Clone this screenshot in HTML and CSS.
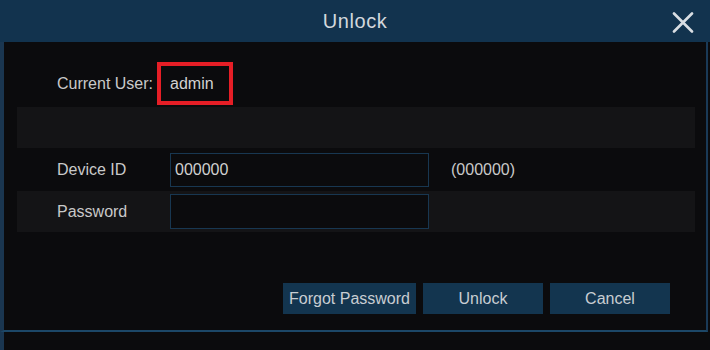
FILE: index.html
```html
<!doctype html>
<html>
<head>
  <meta charset="utf-8">
  <meta name="viewport" content="width=device-width,initial-scale=1">
  <title>Unlock</title>
  <link rel="stylesheet" href="styles.css">
</head>
<body>
  <div class="dialog">
    <div class="titlebar">
      <span></span>
      <h2 class="title">Unlock</h2>
      <span class="close" title="Close">
        <svg width="22" height="21" viewBox="0 0 22 21">
          <path d="M2 1.5 L20 19.5 M20 1.5 L2 19.5" stroke="#d9dee3" stroke-width="2.6" stroke-linecap="round" fill="none"/>
        </svg>
      </span>
    </div>
    <div class="content">
      <div class="user-row">
        <span class="user-label">Current User:</span>
        <span class="user-box">admin</span>
      </div>
      <div class="row band"></div>
      <div class="row">
        <label class="label" for="device-id">Device ID</label>
        <input id="device-id" class="field" type="text" value="000000">
        <span class="hint">(000000)</span>
      </div>
      <div class="row band">
        <label class="label" for="password">Password</label>
        <input id="password" class="field" type="password" value="">
      </div>
      <div class="buttons">
        <button class="btn btn-forgot">Forgot Password</button>
        <button class="btn">Unlock</button>
        <button class="btn">Cancel</button>
      </div>
    </div>
    <div class="below"></div>
  </div>
</body>
</html>
```

FILE: styles.css
```css
body {
  margin: 0;
  background: #0b0b0d;
  font-family: "Liberation Sans", Arial, Helvetica, sans-serif;
  color: #c9c9c9;
  font-size: 16px;
}

.dialog {
  width: 710px;
  height: 350px;
  display: flex;
  flex-direction: column;
  background: #0b0b0d;
}

.titlebar {
  height: 42px;
  flex: none;
  display: grid;
  grid-template-columns: 1fr auto 1fr;
  align-items: center;
  background: #12334e;
}

.title {
  margin: 0;
  font-size: 20px;
  font-weight: normal;
  letter-spacing: 0.6px;
  color: #d3d8dd;
  padding-top: 1px;
}

.close {
  justify-self: end;
  margin-right: 16px;
  margin-top: 2px;
  display: flex;
  cursor: pointer;
}

.content {
  flex: 1;
  display: flex;
  flex-direction: column;
  border-left: 4px solid #1a3650;
  border-right: 2px solid #1a3a57;
  border-bottom: 2px solid #1c4767;
  margin-right: 2px;
  padding: 20px 11px 0 13px;
}

.user-row {
  display: flex;
  align-items: center;
  padding-left: 40px;
  height: 43px;
}

.user-label {
  width: 100px;
}

.user-box {
  box-sizing: border-box;
  height: 43px;
  width: 76px;
  border: 4px solid #e61e26;
  padding-left: 9px;
  line-height: 35px;
  color: #d2d2d2;
}

.row {
  display: flex;
  align-items: center;
  height: 43px;
  padding-left: 40px;
}

.band {
  height: 41px;
  background: #141416;
}

.user-row + .band {
  margin-top: 2px;
}

.label {
  width: 113px;
}

.field {
  box-sizing: border-box;
  width: 259px;
  height: 34px;
  margin: 0;
  padding: 0 4px;
  border: 1px solid #183751;
  background: #0b0b0d;
  color: #d0d0d0;
  font: 16px "Liberation Sans", Arial, sans-serif;
  outline: 0;
}

.band .field {
  height: 35px;
}

.hint {
  margin-left: 22px;
}

.buttons {
  display: flex;
  justify-content: flex-end;
  gap: 7px;
  margin-top: 51px;
  padding-right: 25px;
}

.btn {
  width: 120px;
  height: 31px;
  border: 0;
  padding: 0;
  background: #13354f;
  color: #c8cdd2;
  font: 16px "Liberation Sans", Arial, sans-serif;
  cursor: pointer;
}

.btn-forgot {
  width: 133px;
}

.below {
  height: 18px;
  flex: none;
  border-left: 4px solid #1a3650;
}
```
